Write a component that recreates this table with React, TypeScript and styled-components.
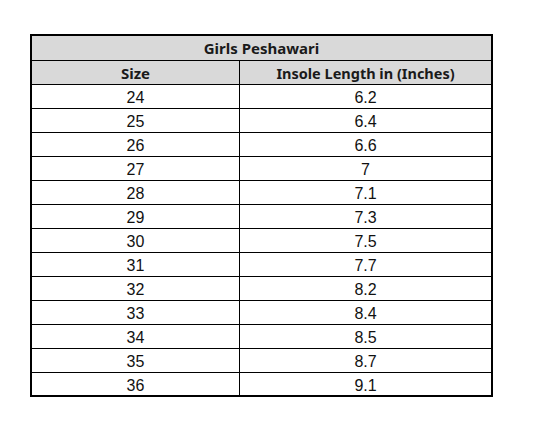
import React from "react";
import styled, { createGlobalStyle } from "styled-components";

const Global = createGlobalStyle`
  html, body { margin: 0; padding: 0; background: #ffffff; }
  body { width: 540px; height: 437px; overflow: hidden; }
`;

const Page = styled.div`
  padding: 34px 0 0 30px;
`;

const Table = styled.table`
  border-collapse: separate;
  border-spacing: 0;
  border: 2px solid #000;
  width: 463px;
  table-layout: fixed;
  color: #111;
`;

const Col = styled.col<{ $w: number }>`
  width: ${(p) => p.$w}px;
`;

const HeadCell = styled.th<{ $divider?: boolean; $h: number; $size: number }>`
  background: #d9d9d9;
  height: ${(p) => p.$h}px;
  padding: 1px 0 0 0;
  box-sizing: border-box;
  border-bottom: 1px solid #000;
  border-right: ${(p) => (p.$divider ? "1px solid #000" : "none")};
  font-family: "Noto Sans", "Open Sans", sans-serif;
  font-weight: 700;
  font-size: ${(p) => p.$size}px;
  line-height: 1;
  text-align: center;
  vertical-align: middle;
  color: #1a1a1a;
`;

const Cell = styled.td<{ $divider?: boolean; $last?: boolean }>`
  height: ${(p) => (p.$last ? 22 : 24)}px;
  padding: 3px 0 0 0;
  box-sizing: border-box;
  border-bottom: ${(p) => (p.$last ? "none" : "1px solid #000")};
  border-right: ${(p) => (p.$divider ? "1px solid #000" : "none")};
  font-family: "Liberation Sans", Arial, sans-serif;
  font-size: 16px;
  line-height: 1;
  text-align: center;
  vertical-align: middle;
  color: #111;
`;

const rows: [string, string][] = [
  ["24", "6.2"],
  ["25", "6.4"],
  ["26", "6.6"],
  ["27", "7"],
  ["28", "7.1"],
  ["29", "7.3"],
  ["30", "7.5"],
  ["31", "7.7"],
  ["32", "8.2"],
  ["33", "8.4"],
  ["34", "8.5"],
  ["35", "8.7"],
  ["36", "9.1"],
];

export default function App() {
  return (
    <>
      <Global />
      <Page>
        <Table>
          <colgroup>
            <Col $w={208} />
            <Col $w={251} />
          </colgroup>
          <thead>
            <tr>
              <HeadCell colSpan={2} $h={25} $size={15}>
                Girls Peshawari
              </HeadCell>
            </tr>
            <tr>
              <HeadCell $divider $h={24} $size={15}>
                Size
              </HeadCell>
              <HeadCell $h={24} $size={14.5}>
                Insole Length in (Inches)
              </HeadCell>
            </tr>
          </thead>
          <tbody>
            {rows.map(([size, len], i) => {
              const last = i === rows.length - 1;
              return (
                <tr key={size}>
                  <Cell $divider $last={last}>{size}</Cell>
                  <Cell $last={last}>{len}</Cell>
                </tr>
              );
            })}
          </tbody>
        </Table>
      </Page>
    </>
  );
}
